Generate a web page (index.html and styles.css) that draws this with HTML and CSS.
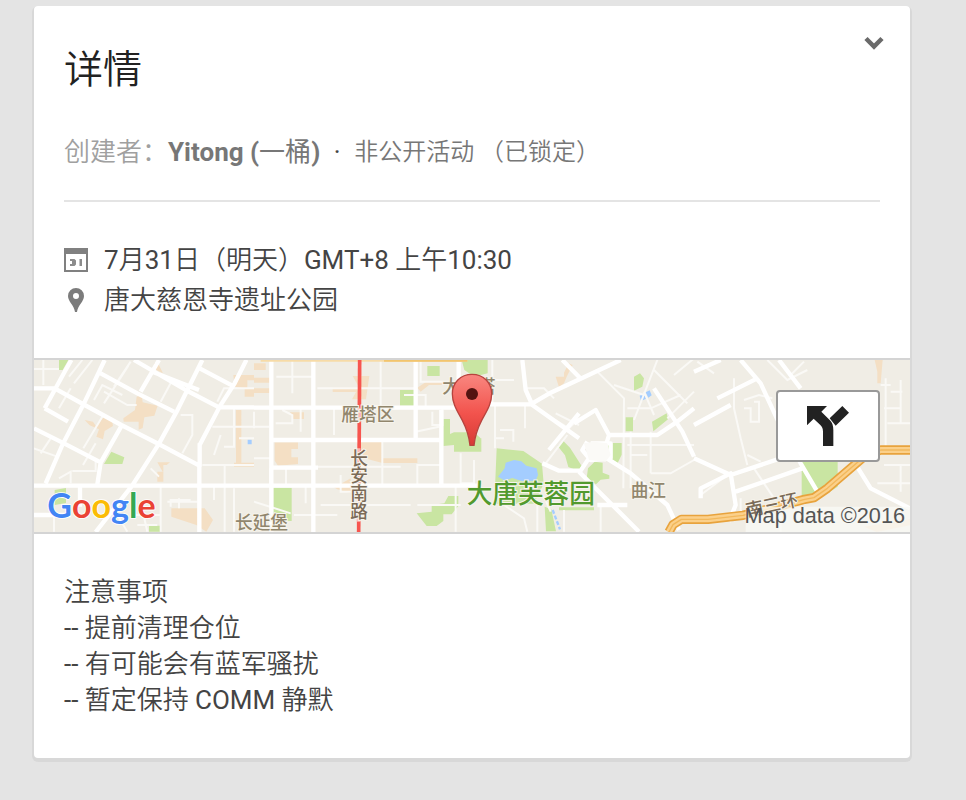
FILE: index.html
```html
<!DOCTYPE html>
<html lang="zh-CN">
<head>
<meta charset="utf-8">
<meta name="viewport" content="width=device-width, initial-scale=1">
<title>详情</title>
<link rel="stylesheet" href="styles.css">
</head>
<body>
<main class="card">
  <header class="header">
    <h1 class="title">详情</h1>
    <button class="collapse" type="button" aria-label="收起">
      <svg width="20" height="14" viewBox="0 0 20 14" aria-hidden="true"><path d="M2 2.500l8 8 8-8" fill="none" stroke="#6a6a6a" stroke-width="4.500"/></svg>
    </button>
  </header>
  <p class="creator">
    <span class="label">创建者：</span><a class="name" href="#"><b>Yitong (</b>一桶<b>)</b></a><span class="dot">·</span><span class="privacy">非公开活动 （已锁定）</span>
  </p>
  <section class="details">
    <p class="row">
      <svg class="icon" viewBox="0 0 24 24" aria-hidden="true"><path d="M0 0h24v24H0zM2 6v16h20V6z" fill="#808080" fill-rule="evenodd"/><path d="M6 11h4.500l1.500 1.500v4L10.500 18H6v-2h2v-3H6zM15.500 11H18v7h-2.500z" fill="#8c8c8c"/></svg>
      <span><span class="latin">7</span>月<span class="latin">31</span>日（明天）<span class="latin">GMT+8</span> 上午<span class="latin">10:30</span></span>
    </p>
    <p class="row">
      <svg class="icon" viewBox="0 0 24 24" aria-hidden="true"><path d="M12 0a8 8 0 0 0-8 8c0 5.500 6 9 7 16h2c1-7 7-10.500 7-16a8 8 0 0 0-8-8zm0 5a3 3 0 1 1 0 6 3 3 0 0 1 0-6z" fill="#7c7c7c" fill-rule="evenodd"/></svg>
      <span>唐大慈恩寺遗址公园</span>
    </p>
  </section>
  <section class="map">
    <svg class="map-art" viewBox="0 15 2628 516" preserveAspectRatio="xMidYMid slice" role="img" aria-label="地图">
      <rect y="15" width="2628" height="516" fill="#f0ede5"/>
      <!-- parks -->
      <g fill="#c9e5a2">
        <path d="M75 15h28l-17 30H75zM232 290l39 17-6 20h-55zM345 512h33v18h-33zM62 405l34-6v45l-34 6z"/>
        <path d="M1180 33h37v30h-37zM1098 105h44v47h-44zM1283 15h78v40l-40 10-30-20zM1228 192h20v45l12-5h60l20 18h2v40h-82v-20l-32 3zM718 398h55v100h-20v-12h-35zM1148 475l45-5v-20l38-5 12-22h30v30l-20 25h-25v20l-20 15h-30z"/>
        <path d="M1388 280l80 8 56 38 5 60-30 60h-118zM1588 258l20 20 35 55-10 15-30-12-10-35-22-28zM1714 264h49v35l-12 25-28-16zM1662 340l20-20 24 3v30l20 8v10l-26 3-14 14-28-18zM1800 65l18-10 12 15-5 25-25 12zM1775 187h22v42h-22zM1854 200l44-25 4 18-44 36zM1532 455l20 8 14 66h-30zM1575 457h105v9h-105z"/>
        <path d="M2303 315h108v80l-62 40h-46z"/>
      </g>
      <g fill="#a4cdff">
        <path d="M1392 365l20-25 3-17 25-8 22 4 15 13 31 8 4 20-7 17-40 2-30-10-22 8z"/>
        <path d="M1817 122l14-6 5 15-15 7zM1835 112l12-6 6 15-10 7zM641 254h12v14h-12z"/>
        <path d="M1556 465l22 58" fill="none" stroke="#a4cdff" stroke-width="7" stroke-dasharray="12 6"/>
      </g>
      <!-- built-up areas -->
      <g fill="#f4dfc4">
        <path d="M268 190l35-25 5-40 15-5 3 22 45 10-10 30-30 5-5 32-12 5v-24h-45zM152 195l25 5 10 15 22-30 25 10 3 18-25 15-5 25-20-8 8-22-28-12zM360 25h12l15 30-20-10zM370 322h38l-10 8h-10v50h-18v-30h16zM412 460h100l25 35-20 35-30-20-75-25zM598 60h62v16h-20v24h20v25h-28v-25l-30-5zM606 165h16v158h38v12h-60v-12h6z"/>
        <path d="M660 25h35v20h-35zM660 68h48v15h-48zM660 100h48v14h-48zM768 172h42v20h-32zM722 262h70v20h-20v25h20v20l-60 5-10-15zM896 98h80l-20-35h50l-10 70h-42l12-22h-70zM980 260h65v50h105v14h-105l-45-12-20-20zM880 385l25 10 45-25v45l-40-12zM1150 98l30-20h90v12h-85l-25 20z"/>
        <path d="M1565 65h25v-12l14-28 12 5-18 35-8 20-15 12zM2522 15h24l-6 70h-10v-35zM2490 515l138-22v18l-100 20z"/>
      </g>
      <!-- lanes -->
      <g class="lanes">
        <path d="M0 42h75M28 15v75M105 65l40-50M120 85l55-70M180 135l25-45 60 30M210 110l70 40h28M75 160l35-60M148 280l60-100M210 145l73-113M240 95l50-75M380 140l35-65M20 295l30-45M0 280l70 25M75 370l35-20v35M115 348h70v-30M185 265l-38 65M440 180h35v60l-30 55M535 215h125M560 240l-20 60M572 330v200M505 330h155M600 155v120h-30M615 250h45M640 15l-40 70M660 100h-90l-20 40M380 390v140M400 440h90M410 455v-20h60M435 430v30M540 395v40M0 480h60M60 485v45M250 480l30 50M300 480h80M320 440l20 90M310 510h60M600 400v130M350 340l25 25"/>
        <path d="M727 65h112M775 15v100M725 205h50v-25l-30-15M660 170v50M800 160v70M756 335v60M815 395v50M850 335h250M660 215h45M708 340v50M850 100h130M975 100h165M1040 15v145M1145 230l70-15M1150 390v-60h70M860 450h270M660 310h50M1110 120h65v35M900 160v80M1045 255v140M920 360v50h35v-25M1160 15v65h125M1225 160v50h-30v-40M1280 295v90h40v-70M1265 390v140M1150 450h130M660 440l110 35M780 480h130"/>
        <path d="M1375 15v130M1320 75h120M1383 150v130M1473 150v70M1470 100h60l30 30M1398 225h40v35M1410 250h-30M1535 325l65-85M1555 190l50 30 20-20M1565 175l70 35M1690 50l80 80-2 270M1780 160h70l90-40M1740 90l90 30M1830 110l30 70M1870 15l-70 180M1860 45l100 100M1920 60l60-50M1780 270h200M1850 230v125M1790 300h50M1850 355h60l70-40M1550 470l-20-45M1700 450v80M1510 440v90M1410 450l60 40 10 40M1590 465v65M1790 230v170M1900 190l80-80"/>
        <path d="M2100 70v90l20 90 20 80M2130 135l45-15 40 10M2130 160h20v40h25v-60h-15M2200 15l60 60 60-30M2270 60l40-40M1980 50l60-25M1990 20l50 35M2140 300l40 20M2160 340l60 90M2540 90h30M2555 70v220M2570 110h35M2550 160h50M2560 205h68M2600 75v130M2550 330h78M2530 385h98M2600 330v80M2120 430v50M2240 480v50M2080 360l-80 60"/>
      </g>
      <!-- streets -->
      <g class="streets">
        <path d="M0 100h62l90 50 110 60 112 57 122 65v199M35 385l50-115 65-125 62-130M32 160l70 40M32 160l60-110 20-35M200 55l110 60 110 55M300 15l155 90 100 52h105M355 50l140 55M320 110l55-95M185 531l110-140 80-125 55-100 75-151M0 220l90 45 110 57M190 388l10-65 65-115M497 270l60-115 45-70 35-70M497 40l98 52M497 265v70M0 392h660M138 395v60M0 480h110"/>
        <path d="M712 15v516M838 15v516M660 158h640M712 255h505M660 392h670M1145 15v235M1222 165v225M1274 15v145M712 338h140M1145 392h180"/>
        <path d="M1365 148h125l60-35 210-98M1465 15l10 90 20 45 140 100M1670 265h60v45l-60 5-25-30 15-25M1585 15l54 55M1620 205l65-40 40 75h145l60-40 50-40M1725 240l-15 50M1860 100l85 130 35 75M1525 325l50 22h65l30-45M1635 350l60 60 120 120M1710 305l80 50 110 95 35 75M1545 285l90-110M1690 450h90"/>
        <path d="M2120 15l60 70 60 130 60 110 50 85M1980 50l80-35M2050 130l120-60M2235 15l65 85M1980 210l110-60M1980 310l110 50 210-70M2000 430v-30l90-45 15 95-20 50M2105 410l200-70M2460 320l50 80 118 60"/>
      </g>
      <path d="M1650 265l30-5 40 5 10 35-15 20-50-5z" fill="#fbfaf7"/>
      <!-- main roads -->
      <path d="M680 16h620" stroke="#f7dba7" stroke-width="8"/>
      <path d="M1050 16h250" stroke="#f2c56e" stroke-width="9"/>
      <g fill="none" stroke-linejoin="round">
        <path class="ring-edge" d="M1905 531l12-22 25-16h80l105-12 100-25 85-23 28-5 40-28 110-95 50-20h90"/>
        <path class="ring-fill" d="M1905 531l12-22 25-16h80l105-12 100-25 85-23 28-5 40-28 110-95 50-20h90"/>
        <path class="ring-line" d="M1905 531l12-22 25-16h80l105-12 100-25 85-23 28-5 40-28 110-95 50-20h90"/>
      </g>
      <path d="M977 15l-3 516" stroke="#f7554f" stroke-width="11"/>
      <path d="M974 158v44M974 280v220" stroke="#ffd6cf" stroke-width="11" opacity=".75"/>
      <path d="M2135 455h493v76h-493z" fill="#faf9f6" opacity=".75"/>
      <!-- place labels -->
      <g class="places">
        <text x="922" y="197">雁塔区</text>
        <text x="603" y="522">长延堡</text>
        <text x="1225" y="113">大雁塔</text>
        <text x="1790" y="425">曲江</text>
        <text class="road" x="2140" y="485" transform="rotate(-12 2140 485)">南三环</text>
        <text class="road vertical" x="975" y="282">长安南路</text>
        <text class="park" x="1298" y="444">大唐芙蓉园</text>
      </g>
      <text class="google" x="40" y="489"><tspan fill="#4285f4">G</tspan><tspan fill="#ea4335">o</tspan><tspan fill="#fbbc05">o</tspan><tspan fill="#4285f4">g</tspan><tspan fill="#34a853">l</tspan><tspan fill="#ea4335">e</tspan></text>
      <text class="credit" x="2613" y="505" text-anchor="end">Map data ©2016</text>
      <!-- marker -->
      <defs><linearGradient id="pin" x2="0" y2="1"><stop stop-color="#f98780"/><stop offset=".55" stop-color="#f2534d"/><stop offset="1" stop-color="#d83a35"/></linearGradient></defs>
      <path d="M1314 58c-35 0-59 26-59 58 0 30 15 52 30 80 14 27 20 45 23 75h12c3-30 9-48 23-75 15-28 30-50 30-80 0-32-24-58-59-58z" fill="url(#pin)" stroke="#b8433e" stroke-width="4"/>
      <circle cx="1314" cy="117" r="18" fill="#541311"/>
    </svg>
    <button class="directions" type="button" aria-label="路线">
      <svg width="42" height="40" viewBox="0 0 126 120" aria-hidden="true"><path d="M0 0h60L43 17l25 25c8 8 11 17 11 30v48H48V77c0-9-2-14-8-20L20 38 0 58zM106 0l20 20-40 39-18-22z" fill="#222"/></svg>
    </button>
  </section>
  <section class="notes">
    <p>注意事项</p>
    <p><span class="latin">--</span> 提前清理仓位</p>
    <p><span class="latin">--</span> 有可能会有蓝军骚扰</p>
    <p><span class="latin">--</span> 暂定保持 <span class="latin">COMM</span> 静默</p>
  </section>
</main>
</body>
</html>
```

FILE: styles.css
```css
* {
  box-sizing: border-box;
}

body {
  margin: 0;
  padding: 6px 56px 40px 34px;
  background: #e4e4e4;
  color: #444;
  font: 350 26px/36px Roboto, "Noto Sans CJK SC", sans-serif;
}

h1,
p {
  margin: 0;
}

button {
  padding: 0;
  cursor: pointer;
}

.latin {
  font-weight: 400;
}

.card {
  padding-top: 30px;
  background: #fff;
  border-radius: 4px;
  box-shadow: 0 2px 0 2px #d8d8d8;
}

.header {
  display: flex;
  justify-content: space-between;
  align-items: flex-start;
  padding: 0 26px 0 30px;
}

.title {
  padding-top: 10px;
  color: #222;
  font-size: 39px;
  font-weight: 350;
  line-height: 48px;
}

.collapse {
  display: flex;
  border: 0;
  background: none;
}

.creator {
  display: flex;
  flex-wrap: wrap;
  margin: 40px 30px 0;
  padding-bottom: 30px;
  border-bottom: 2px solid #e4e4e4;
}

.label {
  color: #a0a0a0;
}

.name {
  color: #777;
  font-weight: 400;
  text-decoration: none;
}

.name b {
  font-weight: 700;
}

.dot {
  width: 34px;
  text-align: center;
  font-weight: 400;
}

.privacy {
  color: #777;
  font-size: 24px;
}

.details {
  padding: 38px 30px;
}

.row {
  display: flex;
  align-items: center;
  gap: 16px;
  line-height: 40px;
}

.icon {
  flex: none;
  width: 24px;
  height: 24px;
}

.map {
  position: relative;
  border: solid #d4d4d4;
  border-width: 2px 0;
}

.map-art {
  display: block;
  width: 100%;
  height: 172px;
}

.lanes {
  fill: none;
  stroke: #faf9f6;
  stroke-width: 6px;
}

.streets {
  fill: none;
  stroke: #fff;
  stroke-width: 13px;
  stroke-linejoin: round;
}

.ring-edge {
  stroke: #e8a33d;
  stroke-width: 28px;
}

.ring-fill {
  stroke: #fbd08a;
  stroke-width: 18px;
}

.ring-line {
  stroke: #f2b85c;
  stroke-width: 4px;
}

.places {
  fill: #91866d;
  stroke: #f7f4ec;
  stroke-width: 6px;
  paint-order: stroke;
  font: 500 53px "Noto Sans CJK SC", sans-serif;
}

.places .park {
  fill: #529a2e;
  font-size: 77px;
  font-weight: 500;
}

.places .road {
  fill: #7b6b58;
}

.places .vertical {
  writing-mode: vertical-rl;
}

.google {
  stroke: #fff;
  stroke-width: 5px;
  paint-order: stroke;
  font: 700 102px Lato, sans-serif;
}

.credit {
  fill: #555;
  font: 400 65px "Liberation Sans", sans-serif;
}

.directions {
  position: absolute;
  top: 30px;
  right: 30px;
  display: flex;
  align-items: center;
  justify-content: center;
  width: 104px;
  height: 72px;
  border: 2px solid #999;
  border-radius: 4px;
  background: #fff;
}

.notes {
  padding: 40px 30px;
}
```
